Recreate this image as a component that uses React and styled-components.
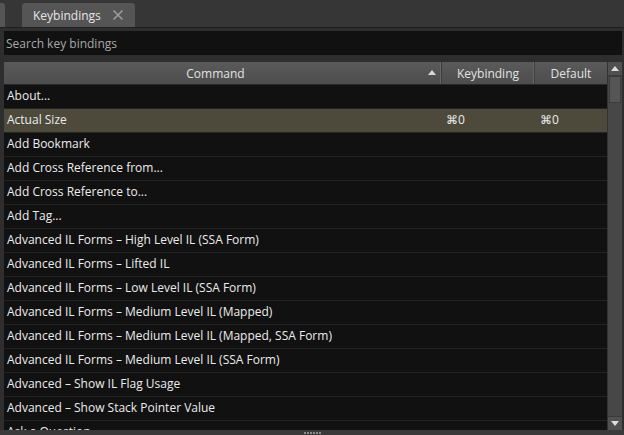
import styled, { createGlobalStyle } from 'styled-components';

const GlobalStyle = createGlobalStyle`
  html, body {
    margin: 0;
    padding: 0;
    background: #2e2e2e;
  }
  body {
    font-family: "Open Sans", "Liberation Sans", sans-serif;
    font-size: 12px;
  }
`;

const Window = styled.div`
  width: 624px;
  height: 435px;
  display: flex;
  flex-direction: column;
  background: #2e2e2e;
  overflow: hidden;
`;

const TabBar = styled.div`
  height: 27px;
  display: flex;
  align-items: flex-end;
  gap: 17px;
  background: #363636;
  border-bottom: 1px solid #1f1f1f;
  flex-shrink: 0;
`;

const Tab = styled.div`
  height: 24px;
  width: ${p => p.$width}px;
  display: flex;
  align-items: center;
  gap: 11px;
  padding: 0 ${p => (p.$stub ? 0 : 11)}px;
  box-sizing: border-box;
  background: #555;
  color: #e6e6e6;
  border-radius: ${p => (p.$stub ? '0 3px 0 0' : '3px 3px 0 0')};
`;

const Close = styled.svg`
  width: 12px;
  height: 12px;
  flex-shrink: 0;
`;

const Body = styled.div`
  flex: 1;
  display: flex;
  flex-direction: column;
  padding: 3px 2px 0 4px;
  gap: 7px;
  min-height: 0;
`;

const Search = styled.div`
  height: 24px;
  display: flex;
  align-items: center;
  padding-left: 2px;
  background: #111;
  color: #a8a8a8;
  flex-shrink: 0;
`;

const TableArea = styled.div`
  flex: 1;
  display: flex;
  min-height: 0;
`;

const Table = styled.div`
  flex: 1;
  display: flex;
  flex-direction: column;
  min-width: 0;
  overflow: hidden;
`;

const HeaderRow = styled.div`
  height: 22px;
  display: grid;
  grid-template-columns: 438px 93px 1fr;
  background: linear-gradient(#5a5a5a, #4d4d4d);
  border-bottom: 1px solid #2a2a2a;
  flex-shrink: 0;
`;

const HeaderCell = styled.div`
  position: relative;
  display: flex;
  align-items: center;
  justify-content: center;
  padding-right: ${p => p.$trim || 0}px;
  color: #e2e2e2;
  border-right: ${p => (p.$last ? 'none' : '1px solid #3e3e3e')};
  box-shadow: ${p => (p.$last ? 'none' : 'inset -1px 0 0 #666')};
`;

const SortArrow = styled.span`
  position: absolute;
  right: 5px;
  top: 8px;
  width: 0;
  height: 0;
  border-left: 4px solid transparent;
  border-right: 4px solid transparent;
  border-bottom: 5px solid #d8d8d8;
`;

const Row = styled.div`
  height: 22px;
  flex-shrink: 0;
  display: grid;
  grid-template-columns: 438px 93px 1fr;
  align-items: center;
  padding-bottom: 1px;
  box-sizing: content-box;
  background: ${p => (p.$selected ? '#4d4a3c' : '#111')};
  border-bottom: 1px solid #242424;
  color: #ececec;
  line-height: 20px;
`;

const Cell = styled.div`
  padding-left: ${p => p.$pad}px;
  white-space: nowrap;
`;

const Scrollbar = styled.div`
  width: 14px;
  display: flex;
  flex-direction: column;
  background: #474747;
  border-left: 1px solid #333;
  flex-shrink: 0;
`;

const ScrollButton = styled.div`
  height: 13px;
  display: flex;
  align-items: center;
  justify-content: center;
  background: #505050;
  border-bottom: ${p => (p.$down ? 'none' : '1px solid #3a3a3a')};
  border-top: ${p => (p.$down ? '1px solid #3a3a3a' : 'none')};
`;

const Arrow = styled.span`
  width: 0;
  height: 0;
  border-left: 4px solid transparent;
  border-right: 4px solid transparent;
  ${p => (p.$down ? 'border-top: 5px solid #ddd;' : 'border-bottom: 5px solid #ddd;')}
`;

const Track = styled.div`
  flex: 1;
  padding: 0 1px;
`;

const Thumb = styled.div`
  height: 25px;
  background: #555;
  border: 1px solid #3c3c3c;
`;

const BottomBar = styled.div`
  height: 5px;
  display: flex;
  justify-content: center;
  align-items: center;
  gap: 1px;
  background: #3a3a3a;
  flex-shrink: 0;
`;

const Dot = styled.span`
  width: 2px;
  height: 2px;
  background: #8a8a8a;
`;

const commands = [
  ['About...', '', ''],
  ['Actual Size', '⌘0', '⌘0'],
  ['Add Bookmark', '', ''],
  ['Add Cross Reference from...', '', ''],
  ['Add Cross Reference to...', '', ''],
  ['Add Tag...', '', ''],
  ['Advanced IL Forms – High Level IL (SSA Form)', '', ''],
  ['Advanced IL Forms – Lifted IL', '', ''],
  ['Advanced IL Forms – Low Level IL (SSA Form)', '', ''],
  ['Advanced IL Forms – Medium Level IL (Mapped)', '', ''],
  ['Advanced IL Forms – Medium Level IL (Mapped, SSA Form)', '', ''],
  ['Advanced IL Forms – Medium Level IL (SSA Form)', '', ''],
  ['Advanced – Show IL Flag Usage', '', ''],
  ['Advanced – Show Stack Pointer Value', '', ''],
  ['Ask a Question', '', ''],
];

export default function App() {
  return (
    <Window>
      <GlobalStyle />
      <TabBar>
        <Tab $stub $width={5} />
        <Tab $width={113}>
          Keybindings
          <Close viewBox="0 0 12 12">
            <path d="M1.5 1.5L10.5 10.5M10.5 1.5L1.5 10.5" stroke="#9c9c9c" strokeWidth="1.6" />
          </Close>
        </Tab>
      </TabBar>
      <Body>
        <Search>Search key bindings</Search>
        <TableArea>
          <Table>
            <HeaderRow>
              <HeaderCell $trim={14}>
                Command
                <SortArrow />
              </HeaderCell>
              <HeaderCell>Keybinding</HeaderCell>
              <HeaderCell $last>Default</HeaderCell>
            </HeaderRow>
            {commands.map(([name, key, def]) => (
              <Row key={name} $selected={name === 'Actual Size'}>
                <Cell $pad={3}>{name}</Cell>
                <Cell $pad={4}>{key}</Cell>
                <Cell $pad={5}>{def}</Cell>
              </Row>
            ))}
          </Table>
          <Scrollbar>
            <ScrollButton>
              <Arrow />
            </ScrollButton>
            <Track>
              <Thumb />
            </Track>
            <ScrollButton $down>
              <Arrow $down />
            </ScrollButton>
          </Scrollbar>
        </TableArea>
      </Body>
      <BottomBar>
        {Array.from({ length: 6 }).map((_, i) => (
          <Dot key={i} />
        ))}
      </BottomBar>
    </Window>
  );
}
